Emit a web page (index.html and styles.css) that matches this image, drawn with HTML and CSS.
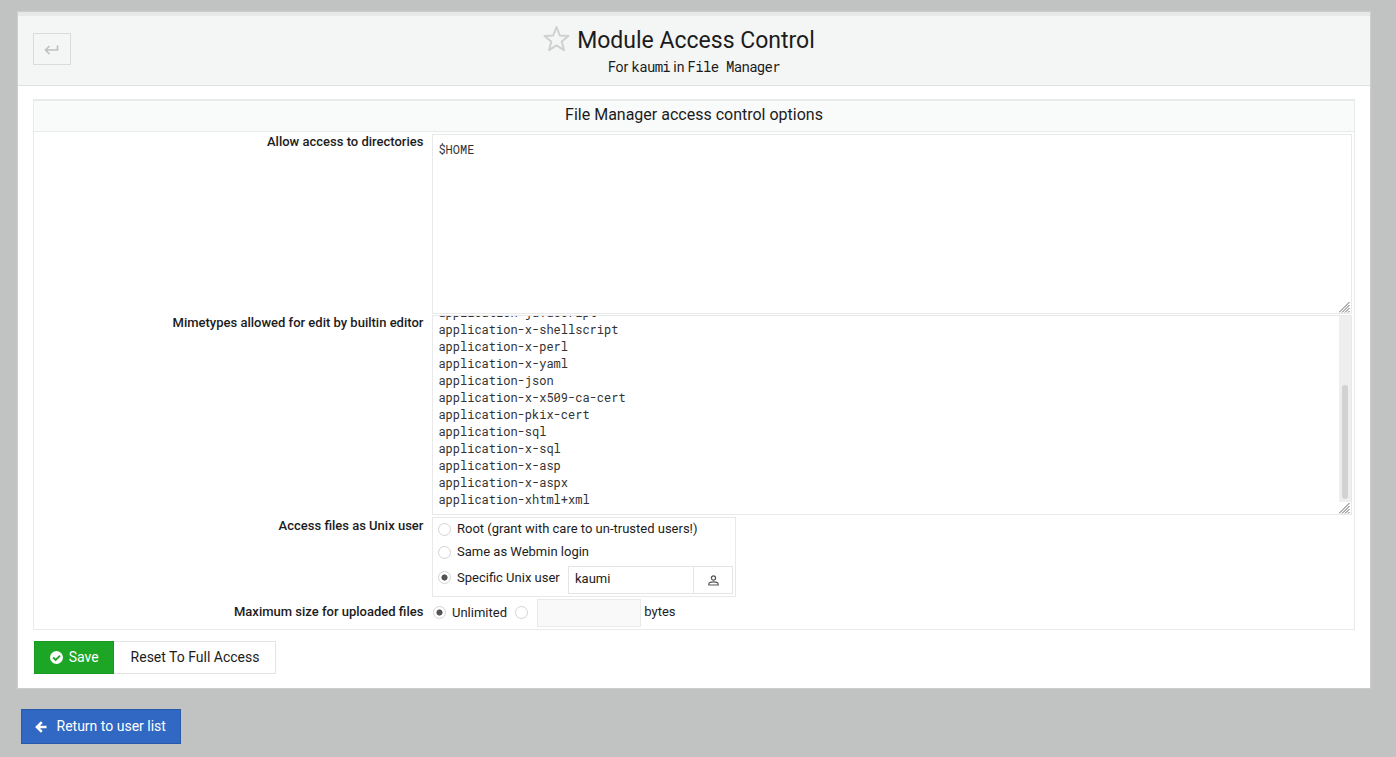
FILE: index.html
```html
<!DOCTYPE html>
<html lang="en">
<head>
<meta charset="utf-8">
<title>Module Access Control</title>
<link rel="stylesheet" href="styles.css">
</head>
<body>
<main class="panel">
  <header class="head">
    <button class="back" aria-label="Back"><svg width="16" height="12" viewBox="0 0 16 12"><path d="M13.500 2.500V7H2M5.500 3L1.500 7l4 4" fill="none" stroke="#bfc1c0" stroke-width="1.700"/></svg></button>
    <div class="titles">
      <h1 class="title"><svg class="star" width="28" height="28" viewBox="0 0 28 28"><path d="M14.500 2l3.300 8.500 8.700.5-6.800 5.500 2.300 8.700-7.500-4.800-7.500 4.800 2.300-8.700L2.500 11l8.700-.5z" fill="none" stroke="#cfd1d0" stroke-width="2" stroke-linejoin="round"/></svg><span class="title-text">Module Access Control</span></h1>
      <p class="subtitle"><span>For</span><span class="mono">kaumi</span><span>in</span><span class="mono">File Manager</span></p>
    </div>
  </header>
  <section class="options">
    <h2 class="caption"><span>File Manager access control options</span></h2>
    <div class="row row-dirs">
      <div class="label">Allow access to directories</div>
      <div class="area area-dirs"><span>$HOME</span><svg class="grip" width="11" height="11" viewBox="0 0 11 11"><path d="M0 10.500L10.500 0M3 10.500L10.500 3M6 10.500L10.500 6M9 10.500L10.500 9" stroke="#666" stroke-width="1"/></svg></div>
    </div>
    <div class="row row-mimes">
      <div class="label">Mimetypes allowed for edit by builtin editor</div>
      <div class="area area-mimes">
        <div class="lines"><span>application-javascript</span><span>application-x-shellscript</span><span>application-x-perl</span><span>application-x-yaml</span><span>application-json</span><span>application-x-x509-ca-cert</span><span>application-pkix-cert</span><span>application-sql</span><span>application-x-sql</span><span>application-x-asp</span><span>application-x-aspx</span><span>application-xhtml+xml</span></div>
        <div class="track"><div class="thumb"></div></div>
        <svg class="grip" width="11" height="11" viewBox="0 0 11 11"><path d="M0 10.500L10.500 0M3 10.500L10.500 3M6 10.500L10.500 6M9 10.500L10.500 9" stroke="#666" stroke-width="1"/></svg>
      </div>
    </div>
    <div class="row row-user">
      <div class="label">Access files as Unix user</div>
      <div class="choices">
        <div class="choice"><i class="radio"></i><span class="choice-text">Root (grant with care to un-trusted users!)</span></div>
        <div class="choice"><i class="radio"></i><span class="choice-text">Same as Webmin login</span></div>
        <div class="choice choice-user"><i class="radio on"></i><span class="choice-text">Specific Unix user</span>
          <div class="user-field"><span class="user-name">kaumi</span><span class="picker"><svg width="11" height="11" viewBox="0 0 11 11"><circle cx="5.500" cy="3" r="2.100" fill="none" stroke="#555" stroke-width="1.200"/><path d="M.8 10V8.900C.8 7.500 3 6.800 5.500 6.800s4.700.7 4.700 2.100V10z" fill="none" stroke="#555" stroke-width="1.200"/></svg></span></div>
        </div>
      </div>
    </div>
    <div class="row row-size">
      <div class="label">Maximum size for uploaded files</div>
      <div class="size"><i class="radio on"></i><span class="unlimited">Unlimited</span><i class="radio"></i><span class="size-input"></span><span class="bytes">bytes</span></div>
    </div>
  </section>
  <div class="actions">
    <button class="btn save"><svg width="13" height="13" viewBox="0 0 12 12"><circle cx="6" cy="6" r="6" fill="#fff"/><path d="M2.900 6l2.300 2.300 4.100-4.100" fill="none" stroke="#1da525" stroke-width="1.700"/></svg><span>Save</span></button>
    <button class="btn reset"><span>Reset To Full Access</span></button>
  </div>
</main>
<a class="return"><svg width="12" height="12" viewBox="0 0 12 12"><path d="M11.500 6H2M6.800 1.100L1.900 6l4.900 4.900" fill="none" stroke="#fff" stroke-width="2.500"/></svg><span>Return to user list</span></a>
</body>
</html>
```
FILE: styles.css
```css
* { box-sizing: border-box; }
body { margin: 0; padding: 12px 26px 0 18px; height: 757px; overflow: hidden; background: #c1c3c2; color: #1c1c1c; font: 13px/17px Roboto, sans-serif; }
h1, h2, p { margin: 0; font-weight: 400; }
button { font: inherit; margin: 0; }
svg { display: block; flex: none; }
.panel { height: 676px; background: #fff; box-shadow: 0 0 1px 1px #cbcdcc; }
.head { display: grid; grid-template-columns: 38px 1fr 38px; height: 74px; padding: 0 15px; background: #f4f6f5; border-top: 4px solid #e7e9e8; border-bottom: 1px solid #dfe1e0; }
.back { display: flex; align-items: center; justify-content: center; width: 38px; height: 32px; margin-top: 17px; padding: 0; background: transparent; border: 1px solid #dadcdb; }
.titles { display: flex; flex-direction: column; align-items: center; }
.title { display: flex; height: 42px; padding-top: 9px; margin-right: 31px; font-size: 23px; line-height: 32px; gap: 7px; }
.title-text { white-space: nowrap; }
.subtitle { display: flex; gap: 3.2px; font-size: 14px; line-height: 18px; }
.mono { font-family: "Roboto Mono", "Liberation Mono", monospace; font-size: 14px; letter-spacing: -0.7px; }
.options { width: 1322px; height: 531px; margin: 13px 0 0 15px; border: 1px solid #e9ebea; border-top-width: 2px; }
.caption { height: 31px; padding-top: 4px; background: #f9fafa; border-bottom: 1px solid #e9ebea; font-size: 16px; line-height: 20px; text-align: center; }
.row { display: grid; grid-template-columns: 390px auto; column-gap: 8px; justify-content: start; }
.label { padding-right: 0.6px; text-align: right; font-weight: 500; white-space: nowrap; }
.row-dirs { margin-top: 2px; }
.row-mimes { margin-top: 1px; }
.row-user, .row-size { margin-top: 2px; }
.row-dirs .label, .row-mimes .label { margin-top: -1px; }
.row-size .label { padding-top: 4px; }
.area { position: relative; width: 920px; border: 1px solid #e9e9e9; color: #333; font: 12px/17px "Roboto Mono", "Liberation Mono", monospace; }
.area-dirs { height: 180px; padding: 6px 5.4px; }
.area-mimes { display: flex; justify-content: space-between; height: 200px; overflow: hidden; }
.lines { display: flex; flex-direction: column; justify-content: flex-end; padding: 0 0 6px 5.4px; overflow: hidden; }
.lines span { flex: none; }
.track { width: 12px; height: 186px; padding: 69px 3px 3px; background: #eeeeee; }
.thumb { height: 114px; background: #d2d2d2; border-radius: 3px; }
.grip { position: absolute; right: 1px; bottom: 0; }
.choices { width: 304px; height: 80px; padding: 0 2px 0 5px; border: 1px solid #e9e9e9; }
.choice { display: flex; align-items: center; height: 23px; gap: 6px; white-space: nowrap; }
.choice-text { margin-top: -1.5px; }
.choice-user { height: 29px; }
.radio { display: block; flex: none; width: 13px; height: 13px; margin-top: -1px; border: 1px solid #d4d4d4; border-radius: 50%; background: #fff; }
.radio.on { background: radial-gradient(circle, #555 0 2.7px, #fff 3.4px); }
.choice-user .radio { margin-top: -2px; }
.choice-user .choice-text { margin-top: -2px; }
.user-field { display: flex; width: 165px; height: 28px; margin: 3px 0 0 auto; border: 1px solid #e5e5e5; }
.user-name { flex: 1; padding: 3px 0 0 6px; border-right: 1px solid #e5e5e5; }
.picker { display: flex; width: 38px; align-items: center; justify-content: center; }
.size { display: flex; height: 28px; align-items: center; padding-left: 1px; }
.size .radio { margin-top: -2px; }
.unlimited { width: 63px; margin: -2px 0 0 6px; }
.size-input { width: 104px; height: 28px; margin-left: 9px; background: #f9f9f9; border: 1px solid #e9e9e9; }
.bytes { margin: -3px 0 0 3.3px; }
.actions { display: flex; margin: 11px 0 0 16px; }
.btn { display: flex; align-items: center; height: 33px; padding: 0 0 0 16.6px; border: 1px solid #e5e5e5; background: #fff; color: #1c1c1c; font-size: 14px; white-space: nowrap; }
.save { width: 80px; gap: 5.8px; padding-left: 15px; background: #1da525; border-color: #189a20; color: #fff; }
.reset { width: 162px; border-left: 0; }
.return { display: flex; align-items: center; gap: 9.5px; width: 160px; height: 35px; margin: 21px 0 0 3px; padding-left: 13px; background: #3168c3; border: 1px solid #285aa9; color: #fff; font-size: 14px; white-space: nowrap; }
```
